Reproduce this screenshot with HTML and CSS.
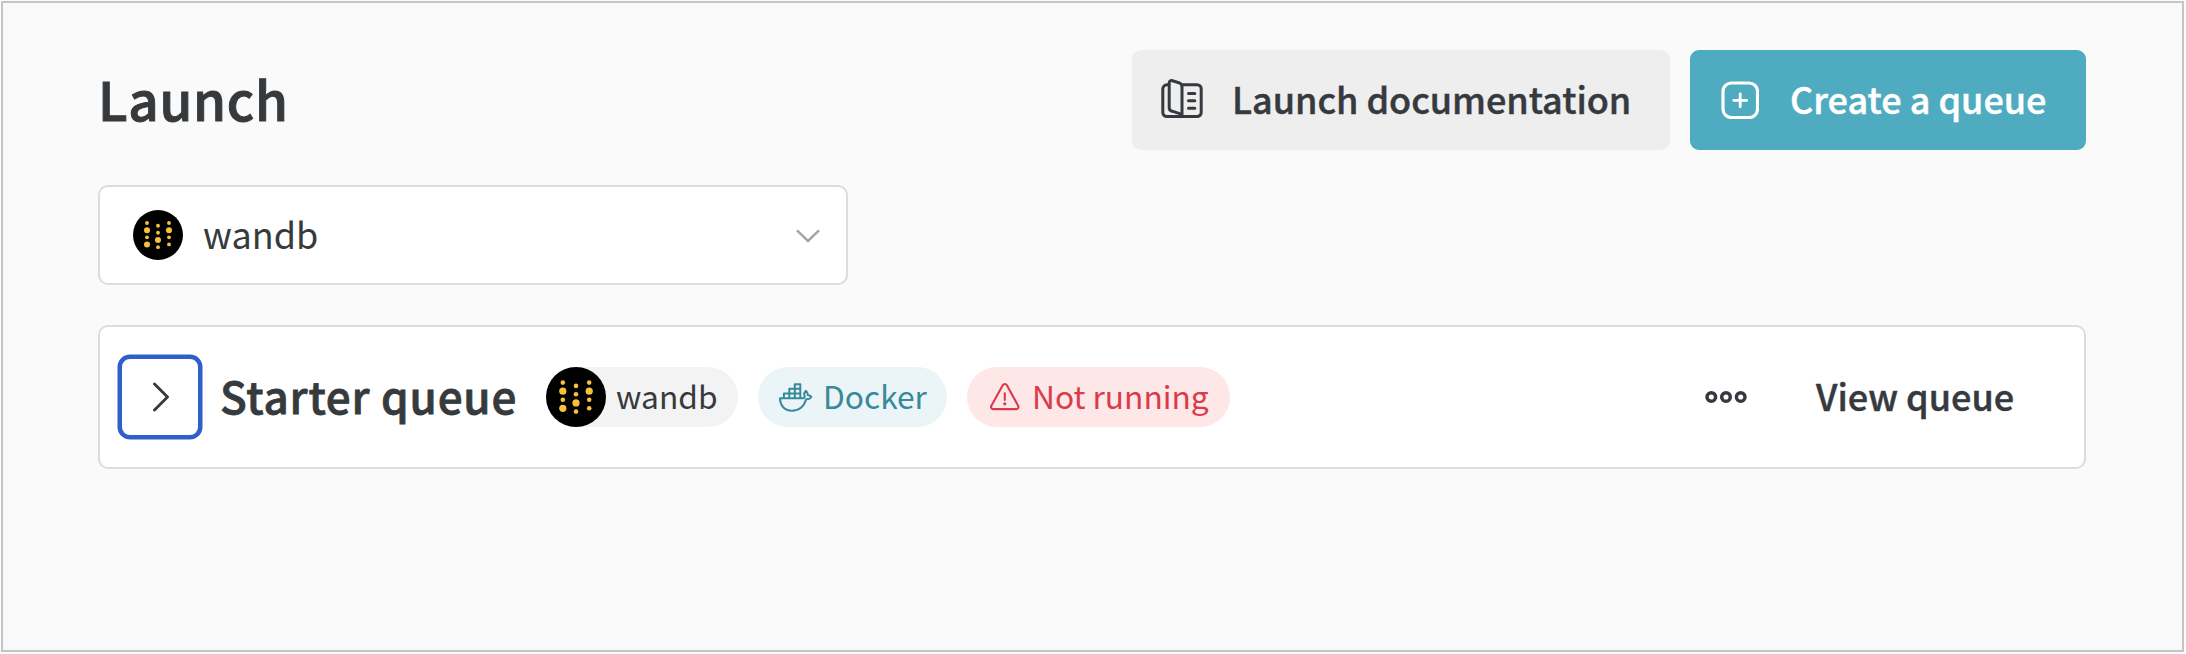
FILE: index.html
```html
<!DOCTYPE html>
<html lang="en">
<head>
<meta charset="utf-8">
<title>Launch</title>
<link rel="stylesheet" href="styles.css">
</head>
<body>
<svg width="0" height="0" class="defs">
  <symbol id="wb" viewBox="0 0 60 60">
    <circle cx="30" cy="30" r="30" fill="#000"/>
    <g fill="#f8c13c">
      <circle cx="16.8" cy="15.6" r="2.3"/><circle cx="16.8" cy="24.2" r="3.6"/><circle cx="16.8" cy="32.8" r="2.3"/><circle cx="16.8" cy="41.3" r="3.6"/>
      <circle cx="30" cy="18.9" r="2.3"/><circle cx="30" cy="27.3" r="2.3"/><circle cx="30" cy="35.9" r="3.6"/><circle cx="30" cy="44.6" r="2.3"/>
      <circle cx="43.2" cy="15.6" r="2.3"/><circle cx="43.2" cy="24.2" r="3.6"/><circle cx="43.2" cy="32.8" r="2.3"/><circle cx="43.2" cy="41.3" r="2.3"/>
    </g>
  </symbol>
</svg>
<div class="frame">
  <main class="panel">
    <header class="header">
      <h1 class="title">Launch</h1>
      <button class="btn btn-docs">
        <svg class="icon-docs" width="42" height="40" viewBox="0 0 42 40" fill="none" stroke="#363a3f" stroke-width="3" stroke-linecap="round" stroke-linejoin="round">
          <path d="M21.5 5.7H36a4.2 4.2 0 0 1 4.2 4.2v23.5a4.2 4.2 0 0 1-4.2 4.2H6a4.2 4.2 0 0 1-4.2-4.2V10A4.2 4.2 0 0 1 6 5.7h1.6"/>
          <path d="M8.2 4c0-1.800 1.500-2.800 3.200-2.300l6.500 2c1.800.7 3.100 2 3.100 4v28.500l-2.300-1.500-7.600-2.500c-1.700-.5-2.900-1.300-2.900-3.200z"/>
          <path d="M27.500 14.400h6.300M27.500 21.800h6.300M27.500 29.200h6.300"/>
        </svg>
        <span class="btn-label">Launch documentation</span>
      </button>
      <button class="btn btn-create">
        <svg width="38" height="38" viewBox="0 0 38 38" fill="none" stroke="#fff" stroke-width="3.200" stroke-linecap="round">
          <rect x="2" y="2" width="34.500" height="34.500" rx="8.500"/>
          <path d="M19.200 12.800v13M12.700 19.300h13" stroke-width="2.800"/>
        </svg>
        <span class="btn-label">Create a queue</span>
      </button>
    </header>
    <div class="select">
      <svg width="50" height="50"><use href="#wb"/></svg>
      <span class="select-label">wandb</span>
      <svg class="caret" width="24" height="14" viewBox="0 0 24 14" fill="none" stroke="#a6a6a6" stroke-width="2.500"><path d="M1 1.300L12 12 23 1.300"/></svg>
    </div>
    <section class="card">
      <button class="expand">
        <svg width="18" height="30" viewBox="0 0 18 30" fill="none" stroke="#363a3f" stroke-width="2.900" stroke-linecap="round" stroke-linejoin="round"><path d="M2.500 2L15.500 15 2.500 28"/></svg>
      </button>
      <h2 class="queue-name">Starter queue</h2>
      <span class="chip chip-entity"><svg width="60" height="60"><use href="#wb"/></svg><span class="chip-label">wandb</span></span>
      <span class="chip chip-docker">
        <svg width="34" height="29" viewBox="0 0 34 29" fill="none" stroke="#38899b" stroke-width="2" stroke-linejoin="round">
          <path d="M1 15.300h23.600c1.200-.6 1.400-1.500.8-3.100-.4-1.400 0-3 1.400-4.400 1.500 1.200 2.100 2.600 2 4.200 1.400.2 2.700.9 3.600 1.900-.9 1.700-2.700 2.400-5.200 2.400C25 23.500 20 27.700 13 27.700 5 27.700 1 22 1 15.300z"/>
          <path d="M4.900 15.300V10.500H21.300M10.300 15.300V5.800H21.300M15.800 15.300V1.200H21.300V15.300"/>
        </svg>
        <span class="chip-label">Docker</span>
      </span>
      <span class="chip chip-status">
        <svg width="30" height="28" viewBox="0 0 30 28" fill="none" stroke="#d93b4c" stroke-width="2.100" stroke-linecap="round" stroke-linejoin="round">
          <path d="M12.700 2.300a2.400 2.400 0 0 1 4.200 0L28.100 22.700a2.200 2.200 0 0 1-2 3.400H3.400a2.200 2.200 0 0 1-2-3.400z"/>
          <path d="M14.800 10.200v6.700"/><circle cx="14.800" cy="20.800" r="1.600" fill="#d93b4c" stroke="none"/>
        </svg>
        <span class="chip-label">Not running</span>
      </span>
      <svg class="more" width="42" height="14" viewBox="0 0 42 14" fill="none" stroke="#363a3f" stroke-width="3.500"><circle cx="6.300" cy="7" r="4.300"/><circle cx="21" cy="7" r="4.300"/><circle cx="35.700" cy="7" r="4.300"/></svg>
      <a class="view">View queue</a>
    </section>
  </main>
</div>
</body>
</html>
```
FILE: styles.css
```css
* { box-sizing: border-box; }
body {
  margin: 0;
  padding: 1px 2px 2px 1px;
  height: 654px;
  background: #fcfcfc;
  color: #363a3d;
  font-family: "Noto Sans CJK SC", "Noto Sans", sans-serif;
  font-weight: 400;
  overflow: hidden;
}
.defs { display: none; }
svg { display: block; flex: none; }
button { font: inherit; border: 0; padding: 0; margin: 0; }
h1, h2 { margin: 0; }
.frame {
  height: 651px;
  border: 2px solid #c5c5c5;
  background: #f9f9f9;
  padding: 37px 96px 0 95px;
}
.panel {
  height: 610px;
  background: #fafafa;
  padding-top: 10px;
}
.header { display: flex; align-items: center; height: 100px; }
.title, .btn-label, .select-label, .queue-name, .chip-label, .view {
  white-space: nowrap;
  line-height: 1;
  padding-bottom: 4px;
}
.title, .btn-label, .queue-name, .view {
  font-weight: 500;
  -webkit-text-stroke: 0.45px currentColor;
}
.title { flex: 1; font-size: 53px; letter-spacing: 0.7px; -webkit-text-stroke-width: 1px; }
.btn {
  display: flex;
  align-items: center;
  height: 100px;
  border-radius: 9px;
  font-size: 36px;
}
.btn-docs { width: 538px; margin-right: 20px; padding-left: 29px; background: #eee; color: #363a3f; }
.btn-docs .btn-label { margin-left: 29px; letter-spacing: -0.03px; }
.icon-docs { margin-top: -2px; }
.btn-create { width: 396px; padding-left: 31px; background: #4fabc0; color: #fff; }
.btn-create .btn-label { margin-left: 31px; }
.select {
  display: flex;
  align-items: center;
  width: 750px;
  height: 100px;
  margin-top: 35px;
  padding: 0 26px 0 33px;
  border: 2px solid #dcdcdc;
  border-radius: 10px;
  background: #fff;
}
.select-label { flex: 1; margin-left: 20px; font-size: 36px; }
.caret { margin-top: 2px; }
.card {
  display: flex;
  align-items: center;
  height: 144px;
  margin-top: 40px;
  padding: 0 70px 0 18px;
  border: 2px solid #dcdcdc;
  border-radius: 10px;
  background: #fff;
}
.expand {
  display: flex;
  align-items: center;
  justify-content: center;
  width: 84px;
  height: 84px;
  padding-left: 2px;
  border: 4px solid #2f5fc8;
  border-radius: 12px;
  background: #fff;
  box-shadow: 0 0 0 0.5px #2f5fc8;
}
.queue-name { margin-left: 18px; width: 326px; font-size: 44px; letter-spacing: 0.8px; -webkit-text-stroke-width: 0.8px; }
.chip {
  display: flex;
  align-items: center;
  height: 60px;
  border-radius: 30px;
  margin-right: 20px;
  font-size: 31.7px;
}
.chip .chip-label { padding-bottom: 3px; }
.chip-entity { width: 192px; background: #f3f3f3; }
.chip-entity .chip-label { margin-left: 10px; }
.chip-docker { width: 189px; padding-left: 21px; background: #ebf4f6; color: #38899b; }
.chip-docker .chip-label { margin-left: 10px; }
.chip-status { width: 263px; padding-left: 23px; background: #fde7e7; color: #d93b4c; }
.chip-status .chip-label { margin-left: 12px; }
.more { margin-left: auto; margin-right: 69px; }
.view { font-size: 36px; color: #363a3f; width: 198px; }
```
